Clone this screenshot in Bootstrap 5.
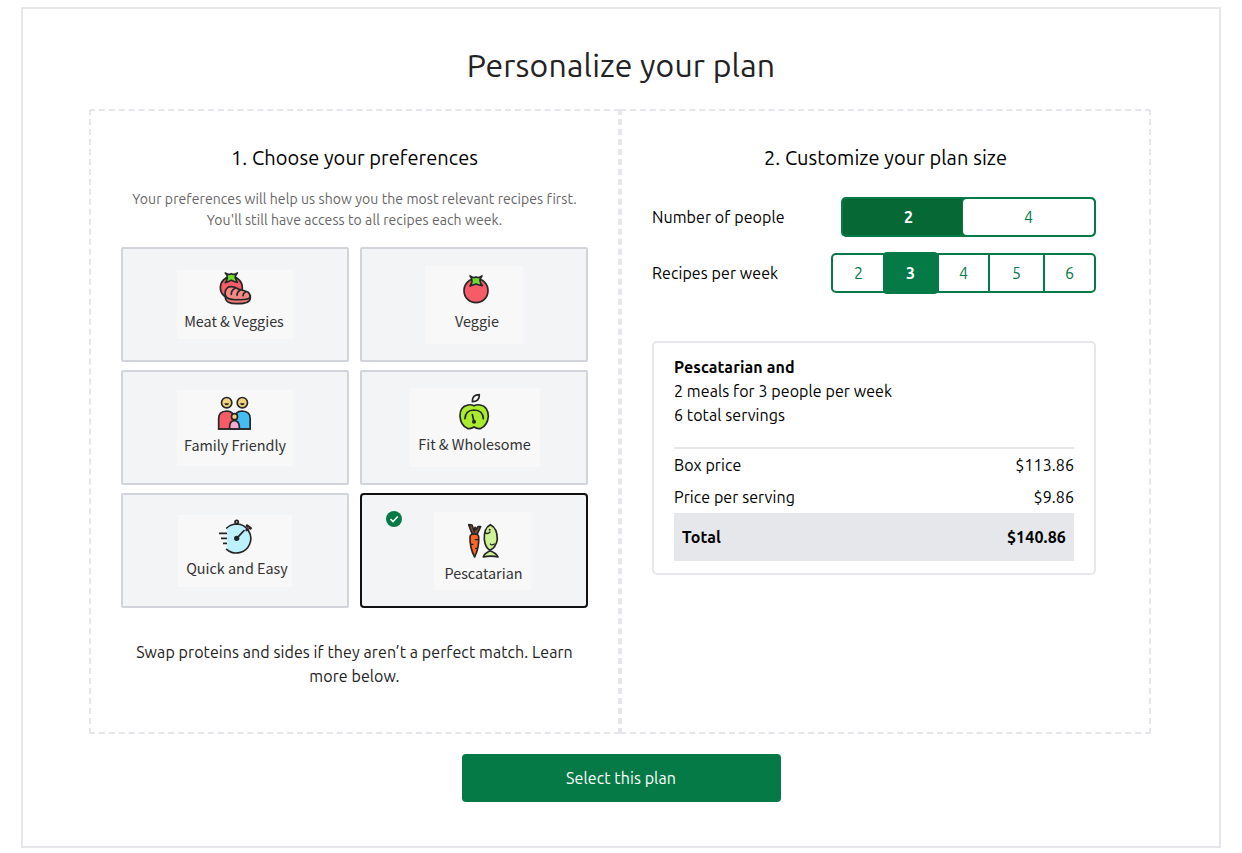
<!DOCTYPE html>
<html lang="en">
<head>
<meta charset="utf-8">
<meta name="viewport" content="width=device-width, initial-scale=1">
<title>Personalize your plan</title>
<link href="https://cdn.jsdelivr.net/npm/bootstrap@5.3.0/dist/css/bootstrap.min.css" rel="stylesheet">
<style>
body{font-family:Ubuntu,"Noto Sans",sans-serif;font-size:16px;line-height:24px;letter-spacing:.08px;color:#000;background:#fff}
b{font-weight:700;letter-spacing:.14px}
.plan-shell{width:1200px;height:841px;margin:7px 0 0 21px;border:2px solid #e5e7eb;padding:36px 66px 0}
.plan-title{font-size:32px;line-height:40px;color:#222;margin:0 0 24px;font-weight:400;letter-spacing:.17px}
.pane{width:531px;height:625px;border:2px dashed #e5e7eb;padding:33px 30px 0}
.pane-size{padding-right:53px}
.pane h2{font-size:20px;line-height:28px;font-weight:400;margin:0;text-align:center}
.pane-size h2{margin-right:-23px}
.hint{font-size:14px;line-height:21px;color:#666;margin-top:17px}
.tiles{display:grid;grid-template-columns:228px 228px;column-gap:11px;row-gap:8px;margin-top:16px}
.tile{height:115px;border:2px solid #d1d5db;border-radius:2px;background:#f3f4f6}
.tile.chosen{border-color:#111;border-radius:4px}
.tick{left:24px;top:16px}
.pic{background:#f8f8f8;font-family:"Noto Sans CJK SC",sans-serif;font-size:14.4px;letter-spacing:0;color:#333;line-height:24px;text-align:center}
.pic svg,.tick svg{display:block}
.pic svg{margin:0 auto}
.pic .ink{stroke:#262626;stroke-width:5;stroke-linecap:round;stroke-linejoin:round;fill:none}
.pic-meat{width:116px;height:69px;padding-top:1px}
.pic-meat span{display:block;margin-top:4px;margin-left:-2px}
.pic-veg{width:98px;height:78px;padding:8px 0 0 4px}
.pic-veg span{display:block;margin-top:4px;margin-left:2px}
.pic-fam{width:116px;height:76px;padding-top:6px}
.pic-fam span{display:block;margin-top:2px}
.pic-fit{width:131px;height:79px;padding-top:5px}
.pic-fit span{display:block;margin-top:2px;margin-left:1px}
.pic-quick{width:114px;height:72px;padding-top:4px}
.pic-quick span{display:block;margin-top:1px;margin-left:4px}
.pic-pesc{width:97px;height:78px;padding-top:11px;margin-left:17px}
.pic-pesc span{display:block;margin-top:2px;margin-left:2px}
.swap{color:#222;margin-top:32px}
.choices{margin-top:25px}
.choice{height:40px}
.choice+.choice{margin-top:16px}
.pick{border:2px solid #067a46;border-radius:5px;height:40px;color:#067a46;background:#fff}
.pick-people{width:255px;background:linear-gradient(90deg,#056835 119px,#067a46 119px)}
.pick-people .on{width:120px;padding-left:11px;color:#fff}
.pick-people .off{width:131px;background:#fff;border-radius:4px}
.pick-people div,.cell{line-height:36px;text-align:center}
.pick-week{width:265px}
.cell{width:51px;border-left:2px solid #067a46}
.cell:first-child{border-left:0}
.cell.sel{width:55px;height:42px;margin:-3px -1px 0 -1px;background:#067a46;border:0;border-radius:4px;color:#fff;line-height:42px}
.cell.wide{width:55px}
.summary{border:2px solid #e5e7eb;border-radius:5px;padding:12px 20px;margin-top:48px;width:444px}
.rule{height:2px;background:#e5e7eb;margin-top:20px}
.total{background:#e5e7eb;height:48px}
.go{width:319px;height:48px;background:#067a46;color:#fff;border-radius:4px;border:0;margin-top:20px;letter-spacing:.09px}
.go:hover{background:#056835;color:#fff}
</style>
</head>
<body>
<main class="plan-shell">
<h1 class="plan-title text-center">Personalize your plan</h1>
<div class="d-flex">
<section class="pane">
<h2>1. Choose your preferences</h2>
<p class="hint text-center mb-0">Your preferences will help us show you the most relevant recipes first.<br>You'll still have access to all recipes each week.</p>
<div class="tiles">
<div class="tile d-flex align-items-center justify-content-center">
<div class="pic pic-meat">
<svg width="34" height="34" viewBox="324 93 102 102"><circle cx="364" cy="143" r="33" fill="#f65c68" stroke="#262626" stroke-width="5"/><path d="M346 99 Q355 106 364 101 Q373 106 382 99 Q374 109 376 114 Q378 120 382 127 Q372 125 364 121 Q356 125 346 128 Q352 119 352 113 Q353 107 346 99z" fill="#6ddb2b" stroke="#262626" stroke-width="5" stroke-linejoin="round"/><path d="M346 172 Q346 192 383 191 Q421 191 421 173 L421 168 L346 165z" fill="#f07c78" stroke="#262626" stroke-width="5"/><path d="M346 165 Q343 150 354 142 Q369 136 385 147 Q402 151 415 157 Q422 164 420 173 Q412 180 384 179 Q349 181 346 165z" fill="#f58a85" stroke="#262626" stroke-width="5"/><path class="ink" d="M375 145q-12 7-11 18M390 151q-9 5-9 15M406 156q-7 4-7 11"/></svg>
<span>Meat &amp; Veggies</span></div>
</div>
<div class="tile d-flex align-items-center justify-content-center">
<div class="pic pic-veg">
<svg width="28" height="31" viewBox="321 102 84 93"><circle cx="363" cy="152" r="36" fill="#f65c68" stroke="#262626" stroke-width="5"/><path d="M345 108 Q354 115 363 111 Q372 115 381 108 Q374 117 375 123 Q376 130 382 137 Q372 135 363 132 Q354 135 345 138 Q351 130 351 123 Q351 115 345 108z" fill="#6ddb2b" stroke="#262626" stroke-width="5" stroke-linejoin="round"/></svg>
<span>Veggie</span></div>
</div>
<div class="tile d-flex align-items-center justify-content-center">
<div class="pic pic-fam">
<svg width="36" height="35" viewBox="321 93 108 105"><g stroke="#262626" stroke-width="5"><circle cx="350" cy="113" r="15.500" fill="#f3d27f"/><circle cx="397" cy="113" r="15.500" fill="#f3d27f"/><path d="M326 192V160q0-21 24-22 21 1 23 20V192z" fill="#f65c68"/><path d="M420.500 192V160q0-21-24-22-21 1-23 20V192z" fill="#43bdf2"/><path d="M359 192v-9q1-16 14-16t15 16v9z" fill="#f5a9d0"/><circle cx="373.500" cy="155" r="9" fill="#f3d27f"/></g><path d="M343 115h14q-1 6-7 6t-7-6M390 115h14q-1 6-7 6t-7-6" fill="#262626"/><path class="ink" d="M326 192h94.500"/></svg>
<span>Family Friendly</span></div>
</div>
<div class="tile d-flex align-items-center justify-content-center">
<div class="pic pic-fit">
<svg width="32" height="37" viewBox="309 84 96 111"><path d="M357 122 Q348 118 339 120 Q314 125 315 154 Q317 181 337 190 Q347 193 357 186 Q367 193 378 190 Q398 180 400 154 Q399 124 376 120 Q366 118 357 122z" fill="#a9eb2e" stroke="#262626" stroke-width="5"/><path class="ink" d="M352 110Q351 89 373 89Q374 110 352 110zM330 161Q331 136 357 135Q384 136 385 161M352 149l5 21"/><circle cx="357" cy="170" r="6" fill="#262626"/></svg>
<span>Fit &amp; Wholesome</span></div>
</div>
<div class="tile d-flex align-items-center justify-content-center">
<div class="pic pic-quick">
<svg width="36" height="36" viewBox="321 93 108 108"><path d="M351 120Q364 108 380 108A43 43 0 1 1 351 183z" fill="#bdf1ff"/><path class="ink" d="M350 120Q363 108 381 108A43.500 43.500 0 1 1 350 184M380 151l22-23"/><path d="M411 113l11 8M414 122l-4 4" class="ink" style="stroke-width:8"/><circle cx="415" cy="120" r="2.500" fill="#d8503f"/><circle cx="380" cy="102" r="5" fill="#ddd" stroke="#262626" stroke-width="5"/><circle cx="380" cy="151" r="8" fill="#262626"/><path class="ink" style="stroke-linecap:butt" d="M327 136h24M333 151h18M339 166h12"/></svg>
<span>Quick and Easy</span></div>
</div>
<div class="tile chosen position-relative d-flex align-items-center justify-content-center">
<div class="tick position-absolute"><svg width="16" height="16" viewBox="0 0 16 16"><circle cx="8" cy="8" r="8" fill="#067a46"/><path d="M4.500 8l2.500 2.600 4.800-5" fill="none" stroke="#fff" stroke-width="1.500"/></svg></div>
<div class="pic pic-pesc">
<svg width="34" height="36" viewBox="333 105 102 108"><g stroke="#262626" stroke-width="5" stroke-linejoin="round"><path d="M352 139L341 110l10 1 7 20 2-13 4 6 5-8 8 0-11 23z" fill="#8f4a35"/><path d="M345 147Q345 138 358 138T371 147Q373 178 359 207Q344 180 345 147z" fill="#ff6421"/><path d="M406 110Q386 120 388 155Q391 180 405 187Q423 178 427 154Q427 120 406 110z" fill="#cff394"/><path d="M405 188Q387 197 385 207Q408 202 429 207Q425 196 405 188z" fill="#cff394"/></g><path class="ink" style="stroke-width:4" d="M361 155h10M347 169h7M362 181h5M389 134q9 6 16-2M418 168q-9 5-12 0"/><circle cx="404" cy="125" r="3" fill="#262626"/></svg>
<span>Pescatarian</span></div>
</div>
</div>
<p class="swap text-center mb-0">Swap proteins and sides if they aren’t a perfect match. Learn<br>more below.</p>
</section>
<section class="pane pane-size">
<h2>2. Customize your plan size</h2>
<div class="choices">
<div class="choice d-flex align-items-center justify-content-between"><span>Number of people</span>
<div class="pick pick-people d-flex"><div class="on"><b>2</b></div><div class="off">4</div></div></div>
<div class="choice d-flex align-items-center justify-content-between"><span>Recipes per week</span>
<div class="pick pick-week d-flex"><div class="cell">2</div><div class="cell sel"><b>3</b></div><div class="cell">4</div><div class="cell wide">5</div><div class="cell">6</div></div></div>
</div>
<div class="summary">
<div><b>Pescatarian and</b></div>
<div>2 meals for 3 people per week</div>
<div>6 total servings</div>
<div class="rule"></div>
<div class="d-flex justify-content-between pt-1 pb-1"><span>Box price</span><span>$113.86</span></div>
<div class="d-flex justify-content-between pt-1 pb-1"><span>Price per serving</span><span>$9.86</span></div>
<div class="total d-flex justify-content-between align-items-center px-2"><b>Total</b><b>$140.86</b></div>
</div>
</section>
</div>
<div class="text-center"><button type="button" class="btn go">Select this plan</button></div>
</main>
<script src="https://cdn.jsdelivr.net/npm/bootstrap@5.3.0/dist/js/bootstrap.bundle.min.js"></script>
</body>
</html>
